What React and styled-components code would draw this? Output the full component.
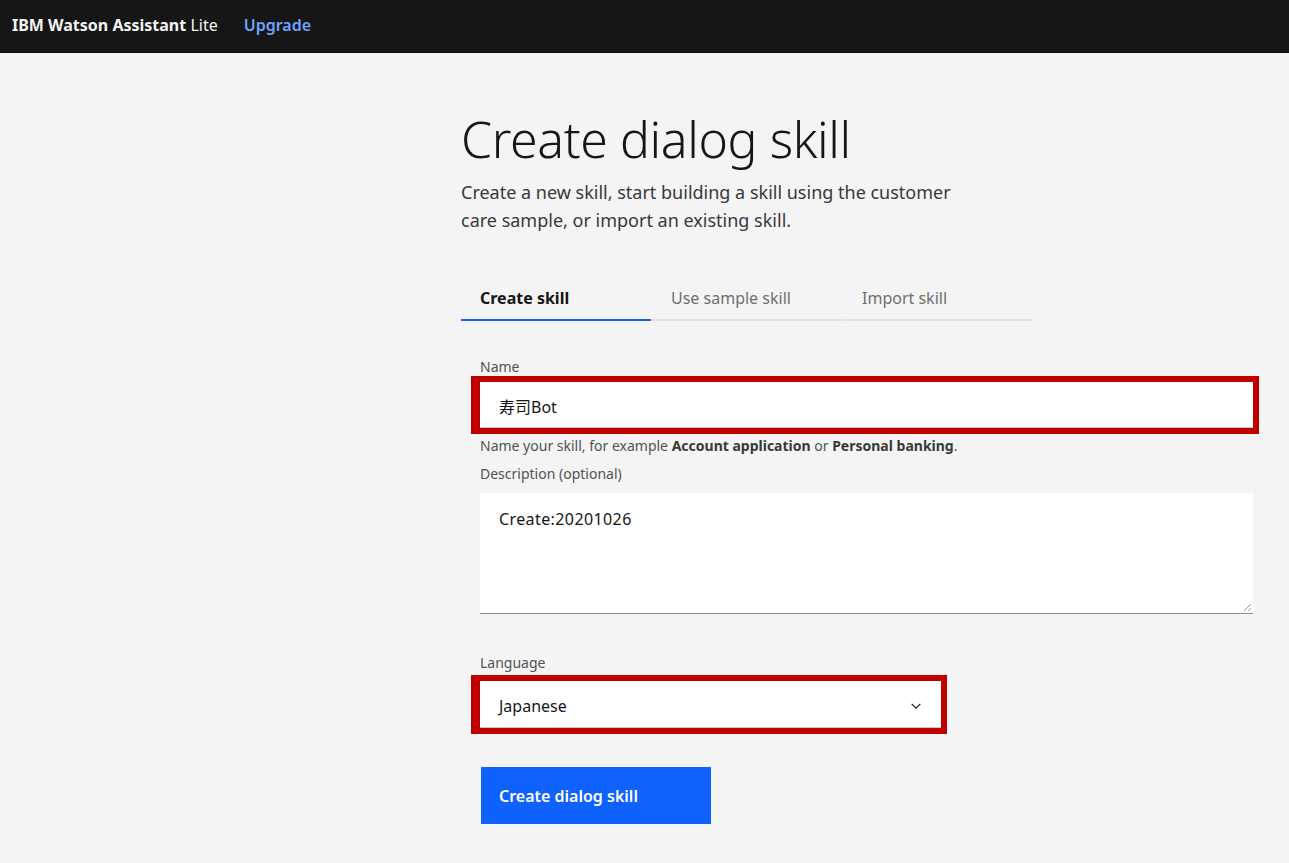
import React from "react";
import styled, { createGlobalStyle } from "styled-components";

const Global = createGlobalStyle`
  html, body { margin: 0; padding: 0; background: #f4f4f4; }
  body { font-family: "Noto Sans", "Noto Sans CJK JP", sans-serif; color: #161616; }
  * { box-sizing: border-box; }
`;

const Page = styled.div`
  min-height: 863px;
  background: #f4f4f4;
  display: flex;
  flex-direction: column;
`;

const Header = styled.header`
  height: 53px;
  background: #161616;
  border-bottom: 1px solid #0b0b0b;
  display: flex;
  align-items: center;
  padding: 0 12px 2px;
  gap: 26px;
  font-size: 16px;
`;

const Brand = styled.span`
  color: #f4f4f4;
  font-weight: 700;
  letter-spacing: 0;
  span { font-weight: 400; }
`;

const Upgrade = styled.a`
  color: #6ea2ff;
  font-weight: 600;
  text-decoration: none;
`;

const Main = styled.main`
  padding: 54px 0 0 461px;
  display: flex;
  flex-direction: column;
`;

const Title = styled.h1`
  margin: 0;
  font-size: 50px;
  font-weight: 300;
  line-height: 64px;
  color: #161616;
  letter-spacing: -0.4px;
`;

const Subtitle = styled.p`
  margin: 7px 0 0;
  width: 520px;
  font-size: 18px;
  line-height: 28px;
  color: #393939;
`;

const Tabs = styled.div`
  margin-top: 47px;
  display: flex;
  gap: 1px;
`;

const Tab = styled.div`
  width: 190px;
  height: 40px;
  padding: 0 19px 5px;
  display: flex;
  align-items: center;
  font-size: 16px;
  font-weight: ${(p) => (p.$active ? 700 : 400)};
  color: ${(p) => (p.$active ? "#161616" : "#6f6f6f")};
  border-bottom: 2px solid ${(p) => (p.$active ? "#0f62fe" : "#e0e0e0")};
`;

const Form = styled.div`
  margin-top: 37px;
  padding-left: 19px;
  display: flex;
  flex-direction: column;
`;

const Label = styled.label`
  font-size: 14px;
  line-height: 18px;
  color: #525252;
  margin-bottom: ${(p) => p.$gap || 6}px;
`;

const Annotated = styled.div`
  position: relative;
  width: ${(p) => p.$w}px;
`;

const Frame = styled.div`
  position: absolute;
  left: -9px;
  top: -6px;
  right: -6px;
  bottom: -6px;
  border: 6px solid #c00000;
  border-left-width: 9px;
  pointer-events: none;
`;

const Input = styled.div`
  height: ${(p) => p.$h || 46}px;
  background: #ffffff;
  border-bottom: 1px solid #c6c6c6;
  display: flex;
  align-items: center;
  padding: 3px 19px 0;
  font-size: 16px;
  color: #161616;
`;

const Helper = styled.div`
  margin-top: 9px;
  font-size: 14px;
  line-height: 18px;
  color: #525252;
  b { font-weight: 700; color: #393939; }
`;

const FieldGap = styled.div`
  height: ${(p) => p.$h}px;
`;

const TextArea = styled.div`
  position: relative;
  width: 773px;
  height: 121px;
  background: #ffffff;
  border-bottom: 1px solid #8d8d8d;
  padding: 15px 19px;
  font-size: 16px;
  letter-spacing: 0.4px;
  color: #161616;
`;

const Grip = styled.svg`
  position: absolute;
  right: 1px;
  bottom: 1px;
`;

const Select = styled(Input)`
  justify-content: space-between;
  padding-right: 18px;
`;

const Button = styled.button`
  margin-top: 39px;
  margin-left: 1px;
  width: 230px;
  height: 57px;
  border: none;
  background: #0f62fe;
  color: #ffffff;
  font-family: inherit;
  font-size: 16px;
  font-weight: 600;
  text-align: left;
  padding: 0 18px;
`;

export default function App() {
  return (
    <Page>
      <Global />
      <Header>
        <Brand>
          IBM Watson Assistant <span>Lite</span>
        </Brand>
        <Upgrade href="#">Upgrade</Upgrade>
      </Header>
      <Main>
        <Title>Create dialog skill</Title>
        <Subtitle>
          Create a new skill, start building a skill using the customer care
          sample, or import an existing skill.
        </Subtitle>
        <Tabs>
          <Tab $active>Create skill</Tab>
          <Tab>Use sample skill</Tab>
          <Tab>Import skill</Tab>
        </Tabs>
        <Form>
          <Label>Name</Label>
          <Annotated $w={773}>
            <Input>寿司Bot</Input>
            <Frame />
          </Annotated>
          <Helper>
            Name your skill, for example <b>Account application</b> or{" "}
            <b>Personal banking</b>.
          </Helper>
          <FieldGap $h={10} />
          <Label $gap={10}>Description (optional)</Label>
          <TextArea>
            Create:20201026
            <Grip width="10" height="10" viewBox="0 0 10 10">
              <path d="M9 2 L2 9 M9 6 L6 9" stroke="#9a9a9a" strokeWidth="1" />
            </Grip>
          </TextArea>
          <FieldGap $h={40} />
          <Label $gap={9}>Language</Label>
          <Annotated $w={461}>
            <Select $h={47}>
              <span>Japanese</span>
              <svg width="14" height="14" viewBox="0 0 16 16">
                <path d="M3 5.5 L8 10.5 L13 5.5" fill="none" stroke="#161616" strokeWidth="1.3" />
              </svg>
            </Select>
            <Frame />
          </Annotated>
          <Button>Create dialog skill</Button>
        </Form>
      </Main>
    </Page>
  );
}
